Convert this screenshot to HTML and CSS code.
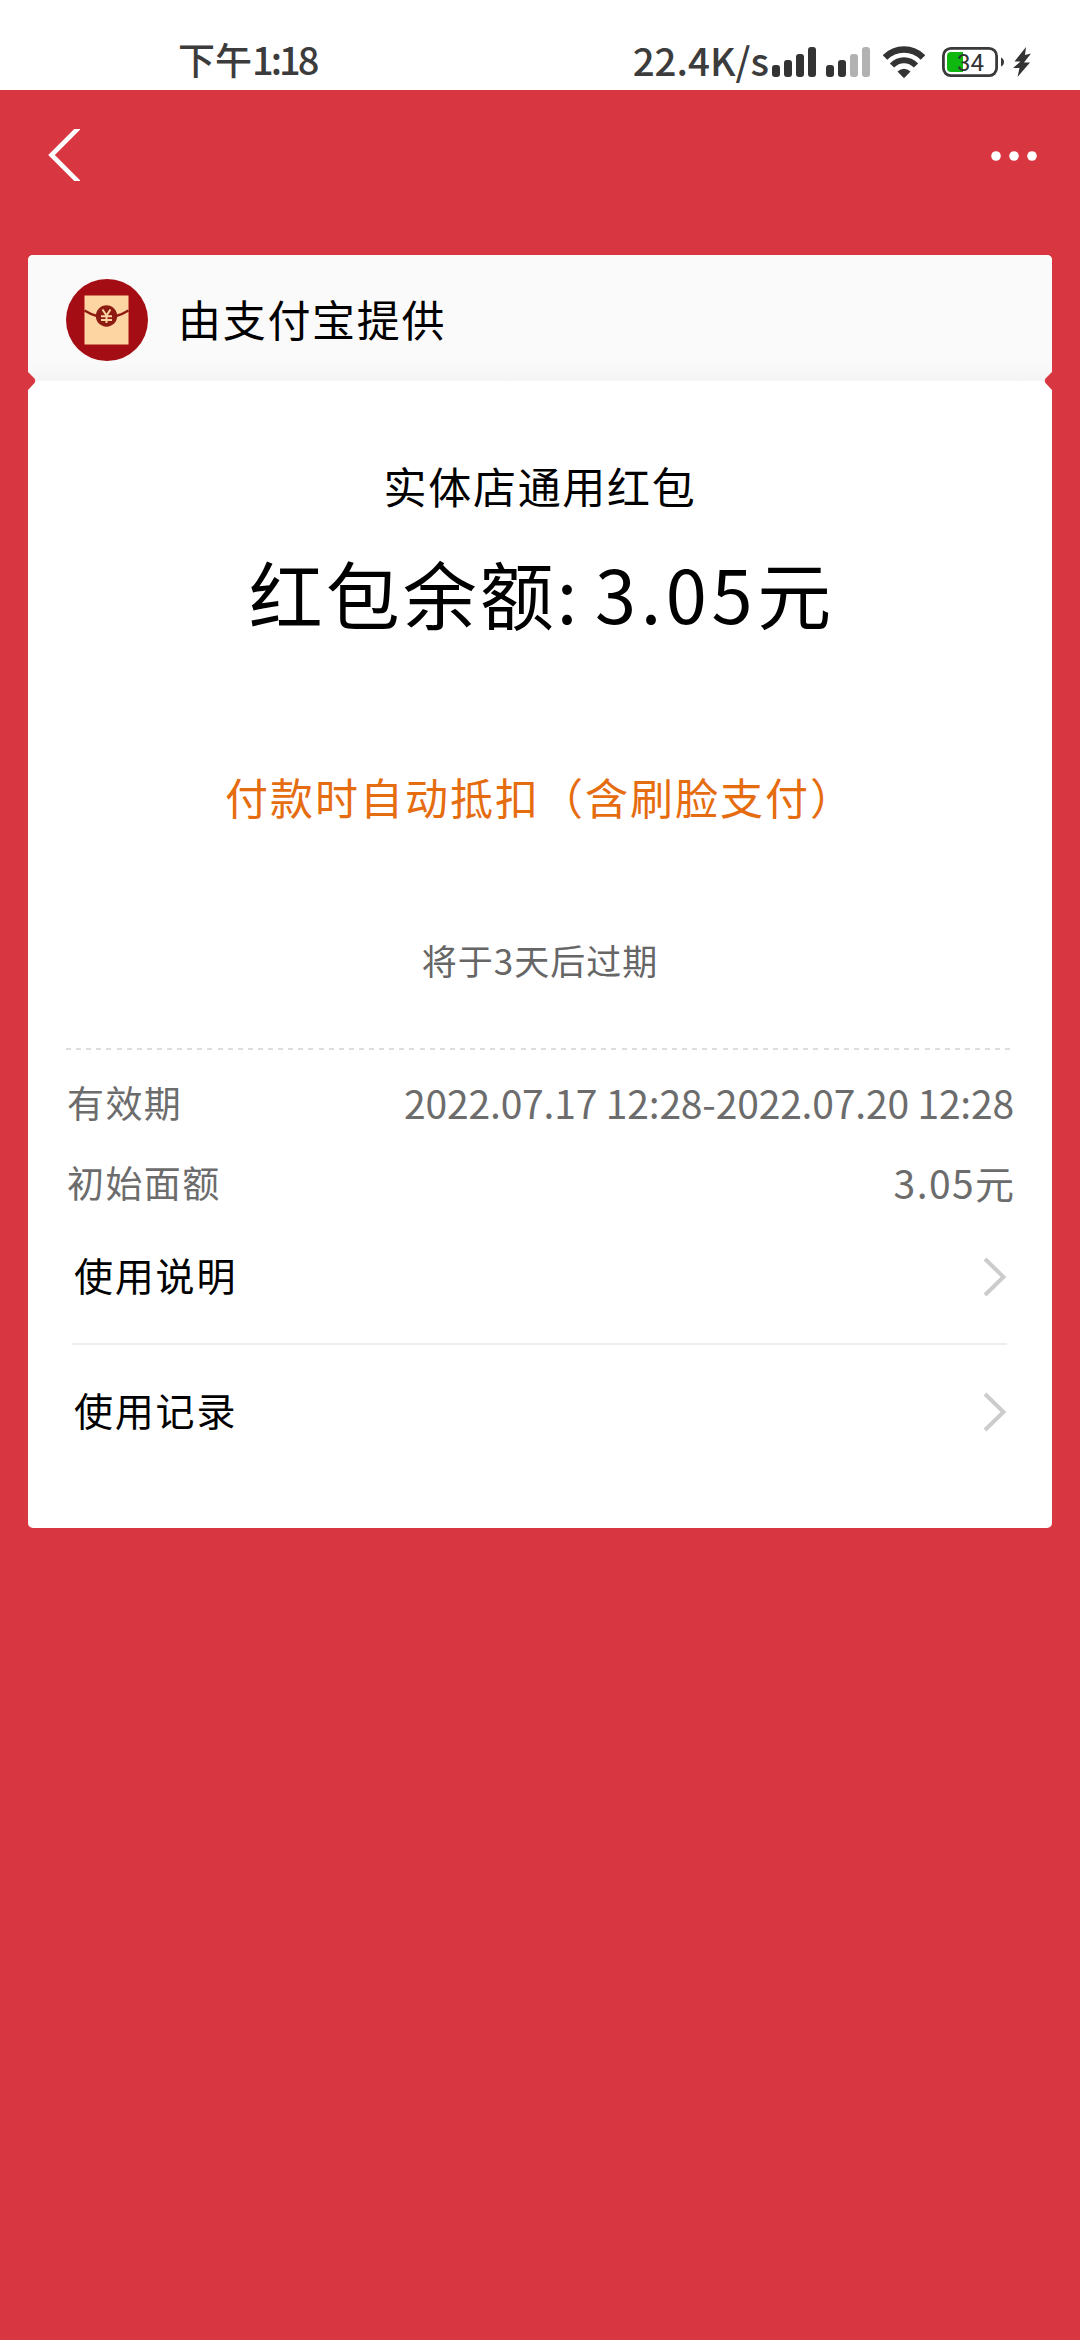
FILE: index.html
```html
<!DOCTYPE html>
<html lang="zh-CN">
<head>
<meta charset="utf-8">
<title>实体店通用红包</title>
<link rel="stylesheet" href="styles.css">
</head>
<body>
<header class="status">
  <span class="status-time">下午<span class="clock">1:18</span></span>
  <div class="status-right">
    <span class="status-speed">22.4K/s</span>
    <svg class="signal" width="44" height="30" viewBox="0 0 44 30" fill="#333">
      <rect x="0" y="18" width="8" height="12" rx="3"/><rect x="12" y="13" width="8" height="17" rx="3"/><rect x="24" y="7" width="8" height="23" rx="3"/><rect x="36" y="0" width="8" height="30" rx="3"/>
    </svg>
    <svg class="signal second" width="44" height="30" viewBox="0 0 44 30" fill="#333">
      <rect x="0" y="18" width="8" height="12" rx="3"/><rect x="12" y="13" width="8" height="17" rx="3"/><rect x="24" y="7" width="8" height="23" rx="3" fill="#b2b2b2"/><rect x="36" y="0" width="8" height="30" rx="3" fill="#b2b2b2"/>
    </svg>
    <svg class="wifi" width="42" height="32" viewBox="0 0 42 32">
      <path d="M2 11.5C12.500 .8 29.500 .8 40 11.500" fill="none" stroke="#333" stroke-width="6.500"/>
      <path d="M9 19.500C16 12.500 26 12.500 33 19.500" fill="none" stroke="#333" stroke-width="6"/>
      <path d="M14.500 25.500Q21 20 27.500 25.500L22 31.300Q21 32.300 20 31.300Z" fill="#333"/>
    </svg>
    <svg class="battery" width="62" height="30" viewBox="0 0 62 30">
      <rect x="1.400" y="1.400" width="53.200" height="27.200" rx="7.500" fill="#fff" stroke="#3a3a3a" stroke-width="2.800"/>
      <path d="M9 5H21V25H9Q5 25 5 21V9Q5 5 9 5Z" fill="#0fb80f"/>
      <path d="M59 10.500Q62 12 62 15T59 19.500Z" fill="#3a3a3a"/>
      <text class="battery-text" x="28.500" y="23.500" text-anchor="middle">34</text>
    </svg>
    <svg class="bolt" width="18" height="30" viewBox="0 0 18 30"><path d="M13 0L1.500 14.500H7.500L0 21H6.500L4.500 30L17 15.500H11L18 6.500L12 8Z" fill="#333"/></svg>
  </div>
</header>
<nav class="nav">
  <svg width="32" height="52" viewBox="0 0 32 52"><path d="M32 -2.500L3.500 26L32 54.500" fill="none" stroke="#fff" stroke-width="4.600"/></svg>
  <svg width="46" height="10" viewBox="0 0 46 10" fill="#fff"><circle cx="5" cy="5" r="4.800"/><circle cx="23" cy="5" r="4.800"/><circle cx="41" cy="5" r="4.800"/></svg>
</nav>
<main class="card">
  <section class="provider">
    <svg width="82" height="82" viewBox="0 0 82 82">
      <circle cx="41" cy="41" r="41" fill="#a50d14"/>
      <rect x="18.500" y="16.500" width="44" height="49" fill="#fdd5a2"/>
      <path d="M18.500 31.500Q24 35 31 37M50 37Q57 35 62.500 31.500" fill="none" stroke="#8e1b12" stroke-width="2.400"/>
      <circle cx="40.500" cy="37" r="10.700" fill="#8e1b12"/>
      <path d="M36.500 30.500L40.500 36.500L44.500 30.500M40.500 36.500V44M35 37.200H46M35 41H46" fill="none" stroke="#fdd5a2" stroke-width="2"/>
    </svg>
    <h1 class="provider-name">由支付宝提供</h1>
    <svg class="notch left" width="8" height="18" viewBox="0 0 8 18"><path d="M0 0L6.500 6.500Q8 9 6.500 11L0 18Z" fill="#d83640"/></svg>
    <svg class="notch right" width="8" height="18" viewBox="0 0 8 18"><path d="M8 0L1.500 6.500Q0 9 1.500 11L8 18Z" fill="#d83640"/></svg>
  </section>
  <section class="summary">
    <p class="title">实体店通用红包</p>
    <p class="amount">红包余额: <span class="number">3.05</span>元</p>
    <p class="hint">付款时自动抵扣（含刷脸支付）</p>
    <p class="expiry">将于3天后过期</p>
  </section>
  <section class="details">
    <div class="detail"><span>有效期</span><span class="date">2022.07.17 12:28-2022.07.20 12:28</span></div>
    <div class="detail"><span>初始面额</span><span class="face"><span class="face-number">3.05</span>元</span></div>
  </section>
  <section class="links">
    <div class="link first"><span>使用说明</span><svg width="24" height="40" viewBox="0 0 24 40"><path d="M2 2L20.500 20L2 38" fill="none" stroke="#ccc" stroke-width="4"/></svg></div>
    <div class="link"><span>使用记录</span><svg width="24" height="40" viewBox="0 0 24 40"><path d="M2 2L20.500 20L2 38" fill="none" stroke="#ccc" stroke-width="4"/></svg></div>
  </section>
</main>
</body>
</html>
```

FILE: styles.css
```css
* { box-sizing: border-box; }
body {
  margin: 0;
  width: 1080px;
  min-height: 2340px;
  background: #d83640;
  color: #000;
  font-family: "Noto Sans CJK SC", sans-serif;
  font-weight: 400;
}
svg { display: block; flex: none; }
h1, p { margin: 0; font-weight: 400; white-space: nowrap; }
.status {
  height: 90px;
  background: #fff;
  display: flex;
  justify-content: space-between;
  padding: 34px 49px 0 178px;
  color: #3c3c3c;
  font-weight: 500;
  line-height: 50px;
  white-space: nowrap;
}
.status-time { font-size: 37px; }
.clock { font-size: 38px; letter-spacing: -3px; }
.status-right { display: flex; align-items: flex-start; }
.status-speed { font-size: 38.500px; margin-right: 3px; }
.signal, .battery, .bolt { margin-top: 13px; }
.second { margin-left: 10px; }
.wifi { margin: 12px 17px 0 13px; }
.bolt { margin-left: 9px; }
.battery { overflow: visible; }
.battery-text { font-family: Roboto, sans-serif; font-size: 24px; fill: #333; font-weight: 400; }
.nav {
  height: 165px;
  display: flex;
  justify-content: space-between;
  align-items: flex-start;
  padding: 39px 43px 0 48px;
}
.nav svg:last-child { margin-top: 22px; }
.card {
  width: 1024px;
  height: 1273px;
  margin: 0 auto;
  background: #fff;
  border-radius: 5px;
  overflow: hidden;
}
.provider {
  position: relative;
  height: 126px;
  display: flex;
  align-items: center;
  gap: 30px;
  padding: 4px 0 0 38px;
  background: linear-gradient(#fafafa 0 108px, #f4f4f4 126px);
}
.provider-name { font-size: 43px; letter-spacing: 1.700px; line-height: 60px; padding-bottom: 4px; }
.notch { position: absolute; bottom: -9px; }
.left { left: 0; }
.right { right: 0; }
.summary {
  display: flex;
  flex-direction: column;
  align-items: center;
  padding-top: 74px;
}
.title { font-size: 43px; line-height: 60px; letter-spacing: 1.700px; }
.amount { font-size: 74px; line-height: 100px; letter-spacing: 3px; word-spacing: -5px; margin-top: 27px; padding-left: 3px; }
.number { letter-spacing: 4.600px; }
.hint { font-size: 43px; line-height: 60px; letter-spacing: 2px; margin-top: 124px; color: #e66c10; }
.expiry { font-size: 35px; line-height: 50px; letter-spacing: 1px; margin-top: 109px; color: #666; }
.details {
  margin: 63px 38px 0;
  padding-top: 14px;
  background: repeating-linear-gradient(90deg, #ddd 0 5px, transparent 5px 10.100px) top / 100% 2px no-repeat;
}
.detail {
  display: flex;
  justify-content: space-between;
  height: 80px;
  padding-left: 1px;
  line-height: 80px;
  font-size: 37px;
  letter-spacing: 1.400px;
  color: #6c6c6c;
}
.date { font-size: 39px; letter-spacing: -.170px; }
.face { font-size: 39px; letter-spacing: 0; }
.face-number { letter-spacing: 1.400px; }
.links { margin: 0 45px 0 44px; }
.link {
  display: flex;
  justify-content: space-between;
  align-items: center;
  height: 128px;
  padding-left: 2px;
  font-size: 39px;
  letter-spacing: 1.800px;
}
.link.first { height: 123px; padding-bottom: 17px; border-bottom: 2px solid #eee; }
.link svg { margin-top: 6px; }
```
